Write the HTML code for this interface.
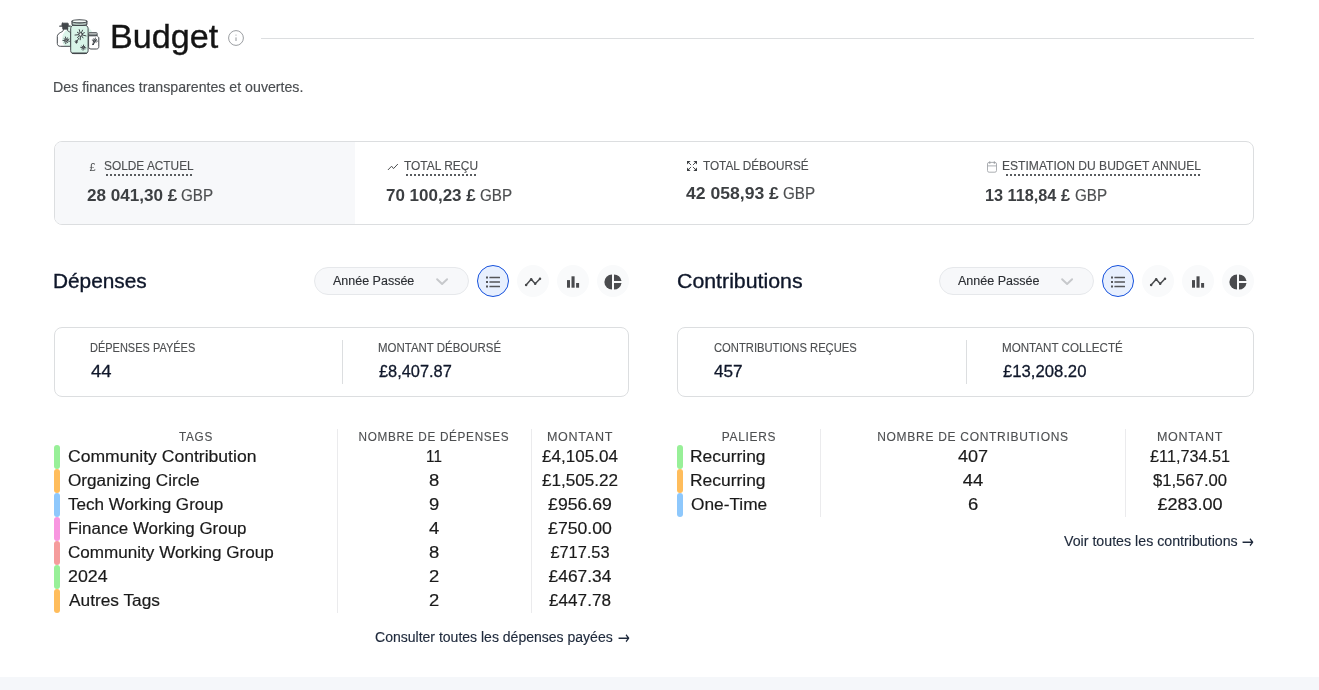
<!DOCTYPE html>
<html lang="fr">
<head>
<meta charset="utf-8">
<title>Budget</title>
<style>
html,body{margin:0;padding:0;background:#fff;}
body{width:1319px;height:690px;position:relative;overflow:hidden;font-family:"Liberation Sans",Arial,sans-serif;}
.t{position:absolute;line-height:1;white-space:nowrap;}
.abs{position:absolute;}
.ar{font-family:"DejaVu Sans",sans-serif;font-size:14px;color:#1e293b;transform:scale(1.04,1.35);}
.box{position:absolute;box-sizing:border-box;border:1px solid #dcdee0;border-radius:8px;background:#fff;}
.vline{position:absolute;width:1px;background:#ebebed;}
.bar{position:absolute;left:0;width:6px;height:24px;border-radius:3px;}
.pill{position:absolute;box-sizing:border-box;height:28px;width:155px;border:1px solid #e6e8eb;border-radius:14px;background:#f7f8fa;}
.cb{position:absolute;box-sizing:border-box;width:32px;height:32px;border-radius:16px;background:#f9fafb;top:265px;}
.cb.on{background:#e8f0fe;border:1px solid #1450dc;}
.cb svg{position:absolute;left:0;top:0;}
.cb.on svg{left:-1px;top:-1px;}
.dot{position:absolute;height:2px;top:174px;background:repeating-linear-gradient(90deg,transparent 0,transparent 2px,#585b5e 2px,#585b5e 4px);}
.footer{position:absolute;left:0;top:677px;width:1319px;height:13px;background:#f5f7fa;}
</style>
</head>
<body>
<div id="root" style="position:absolute;left:0;top:0;width:1319px;height:690px;will-change:transform;">
<!-- header -->
<svg class="abs" id="jar" style="left:50px;top:10px" width="60" height="50" viewBox="50 10 60 50" fill="none" stroke="#42474b" stroke-width="1" stroke-linecap="round" stroke-linejoin="round">
<defs><clipPath id="bc"><path d="M63.3 29 L63.3 30.2 C63.3 32.2 57.3 32.6 57.3 36.6 L57.3 43.4 C57.3 45.4 58.6 46.3 60.4 46.3 L70.8 46.3 L70.8 32.6 C69.4 31.6 67.6 31.4 67.6 30.2 L67.6 29 Z"/></clipPath></defs>
<circle cx="81.5" cy="37" r="11.7" fill="#dcf5ea" stroke="none"/>
<path d="M68.6 25.2 L72 25.2 L72 33 L70.6 33 C69.6 31.6 68.4 31 68 29.6 Z" fill="#dcf5ea" stroke="none"/>
<!-- left bottle -->
<path d="M63.3 29 L63.3 30.2 C63.3 32.2 57.3 32.6 57.3 36.6 L57.3 43.4 C57.3 45.4 58.6 46.3 60.4 46.3 L70.8 46.3 L70.8 32.6 C69.4 31.6 67.6 31.4 67.6 30.2 L67.6 29 Z" fill="#fff" stroke="none"/>
<ellipse cx="71.5" cy="39" rx="9.4" ry="10.5" fill="#dcf5ea" stroke="none" clip-path="url(#bc)"/>
<path d="M63.3 29 L63.3 30.2 C63.3 32.2 57.3 32.6 57.3 36.6 L57.3 43.4 C57.3 45.4 58.6 46.3 60.4 46.3 L70.8 46.3 L70.8 32.6 C69.4 31.6 67.6 31.4 67.6 30.2 L67.6 29 Z"/>
<path d="M59.8 26.2 L70.2 26.2" stroke-width="1.2"/>
<rect x="62" y="23.2" width="6.2" height="3" rx="0.5" fill="#42474b"/>
<rect x="62.8" y="26.2" width="4.9" height="2.9" rx="0.4" fill="#42474b"/>
<circle cx="66.2" cy="40.3" r="1.1" fill="#fff" fill-opacity="0.7"/><path d="M67.59 40.73L69.45 41.30M66.99 41.52L67.67 42.59M66.02 41.74L65.77 43.67M65.14 41.29L64.08 42.26M64.75 40.37L62.97 40.46M65.04 39.42L64.03 38.66M65.88 38.89L65.45 36.98M66.86 39.01L67.44 37.88M67.54 39.74L69.02 39.11"/>
<!-- right jar -->
<path d="M88.6 35.8 L88.6 46.6 C88.6 48.2 89.6 49 91 49 L96.4 49 C97.9 49 98.8 48.2 98.8 46.6 L98.8 38 C98.8 36.8 97.4 36.6 97.2 35.8 Z" fill="#fff"/>
<rect x="88.7" y="32.5" width="8.4" height="3.3" rx="0.9" fill="#8f9696"/>
<path d="M89 33.1 L96.8 33.1" stroke="#fff" stroke-width="0.7" stroke-opacity="0.75"/>
<circle cx="94.8" cy="40.6" r="0.8" fill="#fff" fill-opacity="0.7"/><path d="M95.93 40.83L97.35 41.12M95.44 41.56L95.95 42.33M94.57 41.73L94.28 43.15M93.84 41.24L93.07 41.75M93.67 40.37L92.25 40.08M94.16 39.64L93.65 38.87M95.03 39.47L95.32 38.05M95.76 39.96L96.53 39.45"/>
<path d="M93.9 42.4 L93.2 43.8"/><circle cx="93" cy="44.3" r="0.5" fill="#42474b"/>
<!-- middle jar -->
<path d="M72.6 25.4 C71.2 26.2 70.7 27.4 70.7 28.8 L70.7 50.6 C70.7 52.6 72 53.6 73.8 53.6 L85 53.6 C86.8 53.6 88.1 52.6 88.1 50.6 L88.1 28.8 C88.1 27.4 87.6 26.2 86.2 25.4 Z" fill="#d8f4e8"/>
<path d="M72.6 53.2 L86.2 53.2" stroke-width="1.5"/>
<path d="M72 21.4 L72 24.2 C72 26 86.9 26 86.9 24.2 L86.9 21.4" fill="#aebfb9" stroke-width="1.1"/>
<ellipse cx="79.45" cy="21.3" rx="7.45" ry="1.6" fill="#f4fbf8" stroke-width="1.1"/>
<circle cx="80.6" cy="34.5" r="1.7" fill="#fff" fill-opacity="0.7"/><path d="M82.59 35.01L86.03 35.89M81.80 36.17L83.05 37.91M80.45 36.54L80.20 39.80M79.17 35.97L77.47 37.70M78.56 34.70L75.03 35.05M78.91 33.34L77.36 32.29M80.05 32.53L79.24 29.65M81.44 32.63L82.56 30.16M82.45 33.61L84.39 32.68"/>
<path d="M78.9 38.2 L77.2 40.8"/><path d="M76.4 40.3 L77.7 41.9 L76.4 43.5 L75.1 41.9 Z" fill="#42474b" stroke-width="0.5"/>
<circle cx="83.3" cy="47.6" r="0.9" fill="#fff" fill-opacity="0.7"/><path d="M84.54 47.72L85.89 47.86M84.09 48.57L84.62 49.21M83.18 48.84L83.04 50.19M82.33 48.39L81.69 48.92M82.06 47.48L80.71 47.34M82.51 46.63L81.98 45.99M83.42 46.36L83.56 45.01M84.27 46.81L84.91 46.28"/>
</svg>
<svg class="abs" id="info" style="left:228px;top:30px" width="16" height="16" viewBox="0 0 16 16"><circle cx="8" cy="8" r="7.4" fill="none" stroke="#9a9da1" stroke-width="1"/><rect x="7.4" y="7.4" width="1.2" height="3.6" fill="#a6a9ad"/><rect x="7.4" y="4.5" width="1.2" height="1.3" fill="#c4c6c9"/></svg>
<div class="abs" style="left:261px;top:38px;width:993px;height:1px;background:#dcdee0"></div>

<!-- top stats box -->
<div class="box" style="left:54px;top:141px;width:1200px;height:84px;overflow:hidden"><div style="position:absolute;left:0;top:0;width:300px;height:84px;background:#f7f8fa"></div></div>
<div class="dot" style="left:104px;width:88px"></div>
<div class="dot" style="left:404px;width:72px"></div>
<div class="dot" style="left:1004px;width:196px"></div>

<div class="t" id="pound" style="left:89.5px;top:162px;font-size:11px;color:#4d4f51">£</div>
<svg class="abs" style="left:386px;top:160px" width="14" height="14" viewBox="386 160 14 14"><path d="M388.2 169.7 L391.6 166.2 L393.5 168.6 L397.6 164.3" fill="none" stroke="#4d4f51" stroke-width="1" stroke-linecap="round" stroke-linejoin="round"/></svg>
<svg class="abs" style="left:686px;top:160px" width="12" height="12" viewBox="686 160 12 12"><g fill="#3c3f42"><path d="M687 161 L690.6 161 L687 164.6 Z"/><path d="M697 161 L697 164.6 L693.4 161 Z"/><path d="M687 171 L687 167.4 L690.6 171 Z"/><path d="M697 171 L693.4 171 L697 167.4 Z"/></g><path d="M688.5 162.5 L690.8 164.8 M695.5 162.5 L693.2 164.8 M688.5 169.5 L690.8 167.2 M695.5 169.5 L693.2 167.2" stroke="#3c3f42" stroke-width="0.9" stroke-linecap="round" fill="none"/></svg>
<svg class="abs" style="left:986px;top:160px" width="13" height="14" viewBox="986 160 13 14"><rect x="987.5" y="162.4" width="9" height="9.8" rx="1.6" fill="none" stroke="#a3a6aa" stroke-width="0.9"/><path d="M987.5 165.9 L996.5 165.9" stroke="#a3a6aa" stroke-width="0.9"/><path d="M989.8 161.9 L989.8 163.2 M994.3 161.9 L994.3 163.2" stroke="#9a9da1" stroke-width="1.2" stroke-linecap="round"/></svg>
<!-- section controls -->
<div class="pill" style="left:314px;top:267px"></div>
<div class="pill" style="left:939px;top:267px"></div>

<div class="cb on" style="left:477px"><svg width="32" height="32" viewBox="0 0 32 32"><g fill="#54565a"><rect x="9" y="11.5" width="2" height="2"/><rect x="9" y="16" width="2" height="2"/><rect x="9" y="20.5" width="2" height="2"/><rect x="12.4" y="11.8" width="10.6" height="1.4" rx="0.3"/><rect x="12.4" y="16.3" width="10.6" height="1.4" rx="0.3"/><rect x="12.4" y="20.8" width="10.6" height="1.4" rx="0.3"/></g></svg></div>
<div class="cb" style="left:517px"><svg width="32" height="32" viewBox="0 0 32 32"><path d="M9.1 20 L14.2 14.2 L18.2 18.7 L23 13.7" fill="none" stroke="#46484b" stroke-width="1.4" stroke-linejoin="round" stroke-linecap="round"/><g fill="#46484b"><circle cx="9.1" cy="20" r="1.25"/><circle cx="14.2" cy="14.2" r="1.25"/><circle cx="18.2" cy="18.7" r="1.25"/><circle cx="23" cy="13.7" r="1.25"/></g></svg></div>
<div class="cb" style="left:557px"><svg width="32" height="32" viewBox="0 0 32 32"><g fill="#4a4b4e"><rect x="10" y="15.1" width="3" height="7.6"/><rect x="14.5" y="11.3" width="3.1" height="11.4"/><rect x="19.1" y="18" width="3" height="4.7"/></g></svg></div>
<div class="cb" style="left:597px"><svg width="32" height="32" viewBox="0 0 32 32"><g fill="#4a4b4e"><path d="M15 9.4 A7.6 7.6 0 0 0 15 24.6 Z"/><path d="M17 9.4 A7.6 7.6 0 0 1 24.5 16 L17 16 Z"/><path d="M17 18 L24.5 18 A7.6 7.6 0 0 1 17 24.6 Z"/></g></svg></div>
<div class="cb on" style="left:1102px"><svg width="32" height="32" viewBox="0 0 32 32"><g fill="#54565a"><rect x="9" y="11.5" width="2" height="2"/><rect x="9" y="16" width="2" height="2"/><rect x="9" y="20.5" width="2" height="2"/><rect x="12.4" y="11.8" width="10.6" height="1.4" rx="0.3"/><rect x="12.4" y="16.3" width="10.6" height="1.4" rx="0.3"/><rect x="12.4" y="20.8" width="10.6" height="1.4" rx="0.3"/></g></svg></div>
<div class="cb" style="left:1142px"><svg width="32" height="32" viewBox="0 0 32 32"><path d="M9.1 20 L14.2 14.2 L18.2 18.7 L23 13.7" fill="none" stroke="#46484b" stroke-width="1.4" stroke-linejoin="round" stroke-linecap="round"/><g fill="#46484b"><circle cx="9.1" cy="20" r="1.25"/><circle cx="14.2" cy="14.2" r="1.25"/><circle cx="18.2" cy="18.7" r="1.25"/><circle cx="23" cy="13.7" r="1.25"/></g></svg></div>
<div class="cb" style="left:1182px"><svg width="32" height="32" viewBox="0 0 32 32"><g fill="#4a4b4e"><rect x="10" y="15.1" width="3" height="7.6"/><rect x="14.5" y="11.3" width="3.1" height="11.4"/><rect x="19.1" y="18" width="3" height="4.7"/></g></svg></div>
<div class="cb" style="left:1222px"><svg width="32" height="32" viewBox="0 0 32 32"><g fill="#4a4b4e"><path d="M15 9.4 A7.6 7.6 0 0 0 15 24.6 Z"/><path d="M17 9.4 A7.6 7.6 0 0 1 24.5 16 L17 16 Z"/><path d="M17 18 L24.5 18 A7.6 7.6 0 0 1 17 24.6 Z"/></g></svg></div>

<svg class="abs" style="left:434px;top:276px" width="16" height="12" viewBox="0 0 16 12"><path d="M3.1 3.2 L8.1 8 L13.1 3.2" fill="none" stroke="#c6c8cb" stroke-width="1.9" stroke-linecap="round" stroke-linejoin="round"/></svg>
<svg class="abs" style="left:1059px;top:276px" width="16" height="12" viewBox="0 0 16 12"><path d="M3.1 3.2 L8.1 8 L13.1 3.2" fill="none" stroke="#c6c8cb" stroke-width="1.9" stroke-linecap="round" stroke-linejoin="round"/></svg>
<!-- stat boxes -->
<div class="box" style="left:54px;top:327px;width:575px;height:70px"></div>
<div class="vline" style="left:342px;top:340px;height:44px;background:#dcdee0"></div>
<div class="box" style="left:677px;top:327px;width:577px;height:70px"></div>
<div class="vline" style="left:966px;top:340px;height:44px;background:#dcdee0"></div>

<!-- tables -->
<div class="vline" style="left:337px;top:429px;height:184px"></div>
<div class="vline" style="left:531px;top:429px;height:184px"></div>
<div class="vline" style="left:820px;top:429px;height:88px"></div>
<div class="vline" style="left:1125px;top:429px;height:88px"></div>

<div class="abs" style="left:54px;top:445px;width:6px;height:168px">
<div class="bar" style="top:0;background:#98f098"></div>
<div class="bar" style="top:24px;background:#ffbd5c"></div>
<div class="bar" style="top:48px;background:#8ec8fc"></div>
<div class="bar" style="top:72px;background:#f896e0"></div>
<div class="bar" style="top:96px;background:#f59c9c"></div>
<div class="bar" style="top:120px;background:#98f098"></div>
<div class="bar" style="top:144px;background:#ffbd5c"></div>
</div>
<div class="abs" style="left:677px;top:445px;width:6px;height:72px">
<div class="bar" style="top:0;background:#98f098"></div>
<div class="bar" style="top:24px;background:#ffbd5c"></div>
<div class="bar" style="top:48px;background:#8ec8fc"></div>
</div>

<div class="t" id="title" style="top:19px;font-size:34px;-webkit-text-stroke:0.37px currentColor;color:#141414;left:109.62px;transform-origin:0 50%;transform:scaleX(1.0035);">Budget</div>
<div class="t" id="sub" style="top:80px;font-size:14px;-webkit-text-stroke:0.15px currentColor;color:#4a4d50;left:53.46px;transform-origin:0 50%;transform:scaleX(1.0118);">Des finances transparentes et ouvertes.</div>
<div class="t u" id="l1" style="top:160px;font-size:12px;-webkit-text-stroke:0.13px currentColor;color:#4d4f51;left:103.53px;transform-origin:0 50%;transform:scaleX(0.9890);">SOLDE ACTUEL</div>
<div class="t u" id="l2" style="top:160px;font-size:12px;-webkit-text-stroke:0.13px currentColor;color:#4d4f51;left:404.12px;transform-origin:0 50%;transform:scaleX(0.9946);">TOTAL REÇU</div>
<div class="t" id="l3" style="top:160px;font-size:12px;-webkit-text-stroke:0.13px currentColor;color:#4d4f51;left:702.92px;transform-origin:0 50%;transform:scaleX(0.9801);">TOTAL DÉBOURSÉ</div>
<div class="t u" id="l4" style="top:160px;font-size:12px;-webkit-text-stroke:0.13px currentColor;color:#4d4f51;left:1002.08px;transform-origin:0 50%;transform:scaleX(1.0067);">ESTIMATION DU BUDGET ANNUEL</div>
<div class="t" id="v1" style="top:188px;font-size:16px;font-weight:700;color:#3c3f42;left:87.20px;transform-origin:0 50%;transform:scaleX(1.0694);">28 041,30 £</div>
<div class="t" id="g1" style="top:188px;font-size:16px;-webkit-text-stroke:0.18px currentColor;color:#4d4f51;left:181.28px;transform-origin:0 50%;transform:scaleX(0.9500);">GBP</div>
<div class="t" id="v2" style="top:188px;font-size:16px;font-weight:700;color:#3c3f42;left:385.72px;transform-origin:0 50%;transform:scaleX(1.0613);">70 100,23 £</div>
<div class="t" id="g2" style="top:188px;font-size:16px;-webkit-text-stroke:0.18px currentColor;color:#4d4f51;left:480.28px;transform-origin:0 50%;transform:scaleX(0.9500);">GBP</div>
<div class="t" id="v3" style="top:186px;font-size:16px;font-weight:700;color:#3c3f42;left:686.01px;transform-origin:0 50%;transform:scaleX(1.0987);">42 058,93 £</div>
<div class="t" id="g3" style="top:186px;font-size:16px;-webkit-text-stroke:0.18px currentColor;color:#4d4f51;left:783.28px;transform-origin:0 50%;transform:scaleX(0.9500);">GBP</div>
<div class="t" id="v4" style="top:188px;font-size:16px;font-weight:700;color:#3c3f42;left:985.14px;transform-origin:0 50%;transform:scaleX(1.0153);">13 118,84 £</div>
<div class="t" id="g4" style="top:188px;font-size:16px;-webkit-text-stroke:0.18px currentColor;color:#4d4f51;left:1074.91px;transform-origin:0 50%;transform:scaleX(0.9500);">GBP</div>
<div class="t" id="h1" style="top:271px;font-size:20px;-webkit-text-stroke:0.34px currentColor;color:#0f172a;left:52.64px;transform-origin:0 50%;transform:scaleX(1.0412);">Dépenses</div>
<div class="t" id="h2" style="top:271px;font-size:20px;-webkit-text-stroke:0.34px currentColor;color:#0f172a;left:677.17px;transform-origin:0 50%;transform:scaleX(1.0659);">Contributions</div>
<div class="t" id="s1" style="top:275px;font-size:12px;-webkit-text-stroke:0.13px currentColor;color:#2b2e33;left:332.70px;transform-origin:0 50%;transform:scaleX(1.0414);">Année Passée</div>
<div class="t" id="s2" style="top:275px;font-size:12px;-webkit-text-stroke:0.13px currentColor;color:#2b2e33;left:958.20px;transform-origin:0 50%;transform:scaleX(1.0436);">Année Passée</div>
<div class="t" id="sl1" style="top:342px;font-size:12px;-webkit-text-stroke:0.13px currentColor;color:#4d4f51;left:90.17px;transform-origin:0 50%;transform:scaleX(0.9155);">DÉPENSES PAYÉES</div>
<div class="t" id="sl2" style="top:342px;font-size:12px;-webkit-text-stroke:0.13px currentColor;color:#4d4f51;left:378.14px;transform-origin:0 50%;transform:scaleX(0.9549);">MONTANT DÉBOURSÉ</div>
<div class="t" id="sl3" style="top:342px;font-size:12px;-webkit-text-stroke:0.13px currentColor;color:#4d4f51;left:714.15px;transform-origin:0 50%;transform:scaleX(0.9353);">CONTRIBUTIONS REÇUES</div>
<div class="t" id="sl4" style="top:342px;font-size:12px;-webkit-text-stroke:0.13px currentColor;color:#4d4f51;left:1001.96px;transform-origin:0 50%;transform:scaleX(0.9674);">MONTANT COLLECTÉ</div>
<div class="t" id="sv1" style="top:364px;font-size:16px;-webkit-text-stroke:0.27px currentColor;color:#0f172a;left:91.34px;transform-origin:0 50%;transform:scaleX(1.1500);">44</div>
<div class="t" id="sv2" style="top:364px;font-size:16px;-webkit-text-stroke:0.27px currentColor;color:#0f172a;left:378.64px;transform-origin:0 50%;transform:scaleX(1.0232);">£8,407.87</div>
<div class="t" id="sv3" style="top:364px;font-size:16px;-webkit-text-stroke:0.27px currentColor;color:#0f172a;left:713.98px;transform-origin:0 50%;transform:scaleX(1.0718);">457</div>
<div class="t" id="sv4" style="top:364px;font-size:16px;-webkit-text-stroke:0.27px currentColor;color:#0f172a;left:1002.54px;transform-origin:0 50%;transform:scaleX(1.0416);">£13,208.20</div>
<div class="t" id="th1" style="top:431px;font-size:12px;-webkit-text-stroke:0.13px currentColor;color:#4d4f51;letter-spacing:0.70px;left:45.77px;width:300px;text-align:center;transform:scaleX(0.9812);">TAGS</div>
<div class="t" id="th2" style="top:431px;font-size:12px;-webkit-text-stroke:0.13px currentColor;color:#4d4f51;letter-spacing:0.70px;left:283.95px;width:300px;text-align:center;transform:scaleX(0.9793);">NOMBRE DE DÉPENSES</div>
<div class="t" id="th3" style="top:431px;font-size:12px;-webkit-text-stroke:0.13px currentColor;color:#4d4f51;letter-spacing:0.70px;left:430.37px;width:300px;text-align:center;transform:scaleX(1.0438);">MONTANT</div>
<div class="t" id="th4" style="top:431px;font-size:12px;-webkit-text-stroke:0.13px currentColor;color:#4d4f51;letter-spacing:0.70px;left:598.69px;width:300px;text-align:center;transform:scaleX(0.9940);">PALIERS</div>
<div class="t" id="th5" style="top:431px;font-size:12px;-webkit-text-stroke:0.13px currentColor;color:#4d4f51;letter-spacing:0.70px;left:822.81px;width:300px;text-align:center;transform:scaleX(1.0006);">NOMBRE DE CONTRIBUTIONS</div>
<div class="t" id="th6" style="top:431px;font-size:12px;-webkit-text-stroke:0.13px currentColor;color:#4d4f51;letter-spacing:0.70px;left:1040.06px;width:300px;text-align:center;transform:scaleX(1.0451);">MONTANT</div>
<div class="t" id="r1a0" style="top:449px;font-size:16px;-webkit-text-stroke:0.18px currentColor;color:#1a1a1a;left:67.81px;transform-origin:0 50%;transform:scaleX(1.0980);">Community Contribution</div>
<div class="t" id="r1b0" style="top:449px;font-size:16px;-webkit-text-stroke:0.18px currentColor;color:#1a1a1a;left:283.64px;width:300px;text-align:center;transform:scaleX(0.9500);">11</div>
<div class="t" id="r1c0" style="top:449px;font-size:16px;-webkit-text-stroke:0.18px currentColor;color:#1a1a1a;left:430.04px;width:300px;text-align:center;transform:scaleX(1.0649);">£4,105.04</div>
<div class="t" id="r1a1" style="top:473px;font-size:16px;-webkit-text-stroke:0.18px currentColor;color:#1a1a1a;left:67.94px;transform-origin:0 50%;transform:scaleX(1.0726);">Organizing Circle</div>
<div class="t" id="r1b1" style="top:473px;font-size:16px;-webkit-text-stroke:0.18px currentColor;color:#1a1a1a;left:284.24px;width:300px;text-align:center;transform:scaleX(1.1500);">8</div>
<div class="t" id="r1c1" style="top:473px;font-size:16px;-webkit-text-stroke:0.18px currentColor;color:#1a1a1a;left:430.48px;width:300px;text-align:center;transform:scaleX(1.0711);">£1,505.22</div>
<div class="t" id="r1a2" style="top:497px;font-size:16px;-webkit-text-stroke:0.18px currentColor;color:#1a1a1a;left:68.32px;transform-origin:0 50%;transform:scaleX(1.0672);">Tech Working Group</div>
<div class="t" id="r1b2" style="top:497px;font-size:16px;-webkit-text-stroke:0.18px currentColor;color:#1a1a1a;left:284.20px;width:300px;text-align:center;transform:scaleX(1.1500);">9</div>
<div class="t" id="r1c2" style="top:497px;font-size:16px;-webkit-text-stroke:0.18px currentColor;color:#1a1a1a;left:430.06px;width:300px;text-align:center;transform:scaleX(1.1037);">£956.69</div>
<div class="t" id="r1a3" style="top:521px;font-size:16px;-webkit-text-stroke:0.18px currentColor;color:#1a1a1a;left:67.92px;transform-origin:0 50%;transform:scaleX(1.0580);">Finance Working Group</div>
<div class="t" id="r1b3" style="top:521px;font-size:16px;-webkit-text-stroke:0.18px currentColor;color:#1a1a1a;left:283.72px;width:300px;text-align:center;transform:scaleX(1.1500);">4</div>
<div class="t" id="r1c3" style="top:521px;font-size:16px;-webkit-text-stroke:0.18px currentColor;color:#1a1a1a;left:429.64px;width:300px;text-align:center;transform:scaleX(1.1026);">£750.00</div>
<div class="t" id="r1a4" style="top:545px;font-size:16px;-webkit-text-stroke:0.18px currentColor;color:#1a1a1a;left:68.01px;transform-origin:0 50%;transform:scaleX(1.0677);">Community Working Group</div>
<div class="t" id="r1b4" style="top:545px;font-size:16px;-webkit-text-stroke:0.18px currentColor;color:#1a1a1a;left:284.24px;width:300px;text-align:center;transform:scaleX(1.1500);">8</div>
<div class="t" id="r1c4" style="top:545px;font-size:16px;-webkit-text-stroke:0.18px currentColor;color:#1a1a1a;left:430.34px;width:300px;text-align:center;transform:scaleX(1.0230);">£717.53</div>
<div class="t" id="r1a5" style="top:569px;font-size:16px;-webkit-text-stroke:0.18px currentColor;color:#1a1a1a;left:68.32px;transform-origin:0 50%;transform:scaleX(1.1137);">2024</div>
<div class="t" id="r1b5" style="top:569px;font-size:16px;-webkit-text-stroke:0.18px currentColor;color:#1a1a1a;left:284.25px;width:300px;text-align:center;transform:scaleX(1.1500);">2</div>
<div class="t" id="r1c5" style="top:569px;font-size:16px;-webkit-text-stroke:0.18px currentColor;color:#1a1a1a;left:430.10px;width:300px;text-align:center;transform:scaleX(1.0864);">£467.34</div>
<div class="t" id="r1a6" style="top:593px;font-size:16px;-webkit-text-stroke:0.18px currentColor;color:#1a1a1a;left:68.92px;transform-origin:0 50%;transform:scaleX(1.0803);">Autres Tags</div>
<div class="t" id="r1b6" style="top:593px;font-size:16px;-webkit-text-stroke:0.18px currentColor;color:#1a1a1a;left:284.25px;width:300px;text-align:center;transform:scaleX(1.1500);">2</div>
<div class="t" id="r1c6" style="top:593px;font-size:16px;-webkit-text-stroke:0.18px currentColor;color:#1a1a1a;left:429.90px;width:300px;text-align:center;transform:scaleX(1.0689);">£447.78</div>
<div class="t" id="r2a0" style="top:449px;font-size:16px;-webkit-text-stroke:0.18px currentColor;color:#1a1a1a;left:690.14px;transform-origin:0 50%;transform:scaleX(1.0890);">Recurring</div>
<div class="t" id="r2b0" style="top:449px;font-size:16px;-webkit-text-stroke:0.18px currentColor;color:#1a1a1a;left:823.32px;width:300px;text-align:center;transform:scaleX(1.1255);">407</div>
<div class="t" id="r2c0" style="top:449px;font-size:16px;-webkit-text-stroke:0.18px currentColor;color:#1a1a1a;left:1039.74px;width:300px;text-align:center;transform:scaleX(1.0111);">£11,734.51</div>
<div class="t" id="r2a1" style="top:473px;font-size:16px;-webkit-text-stroke:0.18px currentColor;color:#1a1a1a;left:690.14px;transform-origin:0 50%;transform:scaleX(1.0890);">Recurring</div>
<div class="t" id="r2b1" style="top:473px;font-size:16px;-webkit-text-stroke:0.18px currentColor;color:#1a1a1a;left:823.24px;width:300px;text-align:center;transform:scaleX(1.1500);">44</div>
<div class="t" id="r2c1" style="top:473px;font-size:16px;-webkit-text-stroke:0.18px currentColor;color:#1a1a1a;left:1039.88px;width:300px;text-align:center;transform:scaleX(1.0400);">$1,567.00</div>
<div class="t" id="r2a2" style="top:497px;font-size:16px;-webkit-text-stroke:0.18px currentColor;color:#1a1a1a;left:690.64px;transform-origin:0 50%;transform:scaleX(1.0803);">One-Time</div>
<div class="t" id="r2b2" style="top:497px;font-size:16px;-webkit-text-stroke:0.18px currentColor;color:#1a1a1a;left:823.32px;width:300px;text-align:center;transform:scaleX(1.1500);">6</div>
<div class="t" id="r2c2" style="top:497px;font-size:16px;-webkit-text-stroke:0.18px currentColor;color:#1a1a1a;left:1040.00px;width:300px;text-align:center;transform:scaleX(1.1279);">£283.00</div>
<div class="t" id="lk1" style="top:630px;font-size:14px;-webkit-text-stroke:0.15px currentColor;color:#1e293b;left:374.73px;transform-origin:0 50%;transform:scaleX(1.0015);">Consulter toutes les dépenses payées</div>
<div class="t" id="lk2" style="top:534px;font-size:14px;-webkit-text-stroke:0.15px currentColor;color:#1e293b;left:1063.60px;transform-origin:0 50%;transform:scaleX(1.0147);">Voir toutes les contributions</div>
<div class="t ar" id="ar1" style="left:617.6px;top:630.3px">→</div>
<div class="t ar" id="ar2" style="left:1241.8px;top:534.3px">→</div>

<div class="footer"></div>
</div>
</body>
</html>
